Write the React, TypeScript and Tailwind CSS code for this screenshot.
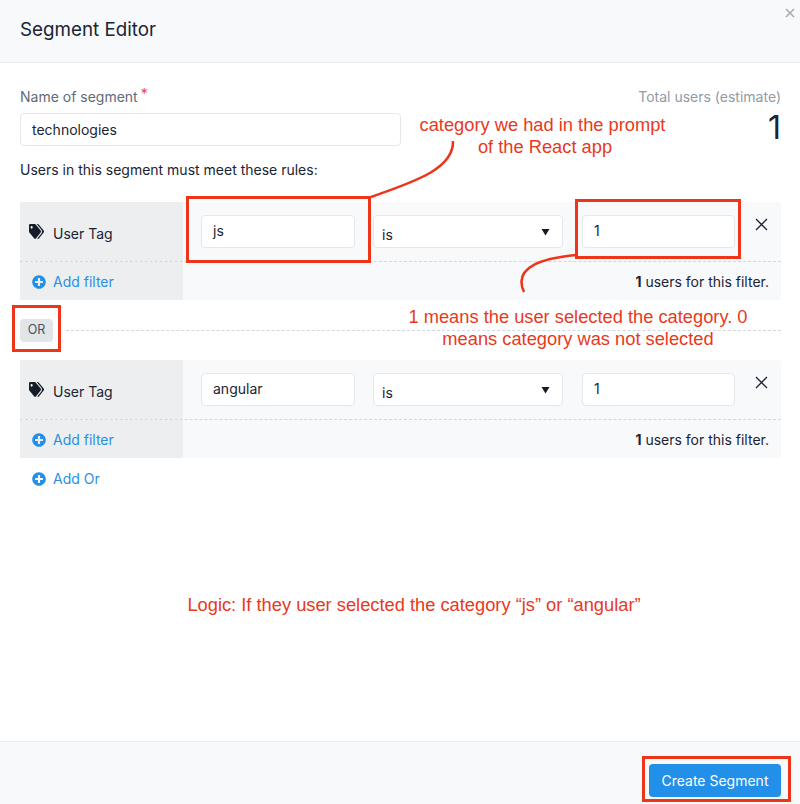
import { FaPlusCircle, FaTags } from "react-icons/fa";

const ink = "text-[#1a2433]";

function Field({ value, className }: { value: string; className: string }) {
  return (
    <div className={`h-[33px] rounded-[4px] border border-[#e4e7eb] bg-white pl-[11px] text-[14px] leading-[30px] ${ink} ${className}`}>
      {value}
    </div>
  );
}

function AddLink({ label }: { label: string }) {
  return (
    <div className="flex items-center gap-[7px] text-[14px] leading-5 text-[#2b8fe0]">
      <FaPlusCircle className="h-[14px] w-[14px] text-[#2290e8]" />
      <span>{label}</span>
    </div>
  );
}

function Rule({ tag }: { tag: string }) {
  return (
    <div className="h-[98px] rounded-[3px] bg-[#f8f9fb]">
      <div className="flex h-[60px] border-b border-dashed border-[#d3d6da]">
        <div className={`flex w-[163px] shrink-0 items-center gap-[9px] bg-[#eceef0] pl-[9px] pt-[3px] text-[14px] ${ink}`}>
          <FaTags preserveAspectRatio="none" className="-mt-[3px] h-[15px] w-[15px] text-[#141c28]" />
          <span>User Tag</span>
        </div>
        <div className="flex flex-1 gap-[18px] pl-[18px] pt-[13px]">
          <Field value={tag} className="w-[154px]" />
          <div className={`flex h-[33px] w-[190px] items-center justify-between rounded-[4px] border border-[#e4e7eb] bg-white pl-[8px] pr-[12px] text-[14px] ${ink}`}>
            <span className="pt-[6px]">is</span>
            <svg width="9" height="8" viewBox="0 0 9 8" className="text-[#141c28]">
              <path d="M0.5 1h8L4.5 7.5z" fill="currentColor" />
            </svg>
          </div>
          <Field value="1" className="ml-px w-[153px]" />
          <svg width="13" height="13" viewBox="0 0 13 13" className="ml-[2px] mt-[3px] text-[#1a2433]">
            <path d="M1 1l11 11M12 1L1 12" stroke="currentColor" strokeWidth="1.3" />
          </svg>
        </div>
      </div>
      <div className="flex h-[38px] pt-px">
        <div className="-mt-px flex w-[163px] shrink-0 items-center bg-[#eceef0] pl-[12px] pt-[2px]">
          <AddLink label="Add filter" />
        </div>
        <div className={`flex flex-1 items-center justify-end pr-[12px] text-[14px] ${ink}`}>
          <span>
            <b className="font-bold">1</b> users for this filter.
          </span>
        </div>
      </div>
    </div>
  );
}

function RedBox({ className }: { className: string }) {
  return <div className={`absolute border-[3px] border-[#ee3419] ${className}`} />;
}

function Note({ className, children }: { className: string; children: React.ReactNode }) {
  return (
    <div className={`absolute text-center font-['Liberation_Sans',sans-serif] text-[18.3px] leading-[22px] text-[#e8391d] ${className}`}>
      {children}
    </div>
  );
}

export default function App() {
  return (
    <div className="relative flex h-[804px] w-[800px] flex-col overflow-hidden bg-white font-['Inter',sans-serif]">
      <header className="flex h-[63px] shrink-0 items-center border-b border-[#e8ebef] bg-[#f8f9fb] px-5">
        <h1 className={`pb-px text-[18.8px] font-normal ${ink}`}>Segment Editor</h1>
      </header>

      <main className="flex-1 pl-5 pr-[19px] pt-[25px]">
        <div className="flex items-start justify-between">
          <div>
            <div className="text-[14px] leading-[18px] text-[#626a74]">
              Name of segment<span className="relative -top-[3px] ml-[3px] text-[#e5484d]">*</span>
            </div>
            <div className={`mt-[7px] h-[33px] w-[381px] rounded-[4px] border border-[#e4e7eb] bg-white pl-[11px] text-[14px] leading-[31px] ${ink}`}>
              technologies
            </div>
          </div>
          <div className="text-right">
            <div className="text-[14px] leading-[18px] text-[#929aa6]">Total users (estimate)</div>
            <div className={`mt-[2px] text-[32px] leading-[40px] ${ink}`}>1</div>
          </div>
        </div>
        <p className={`mt-[12px] text-[14px] leading-5 ${ink}`}>Users in this segment must meet these rules:</p>

        <div className="mt-[22px]">
          <Rule tag="js" />
          <div className="flex h-[60px] items-center gap-[13px]">
            <div className="flex h-[23px] w-[33px] items-center justify-center rounded-[4px] bg-[#e2e5e8] text-[12.5px] text-[#4a525c]">
              OR
            </div>
            <div className="flex-1 border-t border-dashed border-[#d3d6da]" />
          </div>
          <Rule tag="angular" />
          <div className="mt-[11px] pl-[12px]">
            <AddLink label="Add Or" />
          </div>
        </div>
      </main>

      <footer className="flex h-[63px] shrink-0 items-center justify-end border-t border-[#e8ebef] bg-[#f8f9fb] pr-[19px] pt-[15px]">
        <div className="flex h-[33px] w-[132px] items-center justify-center rounded-[4px] bg-[#2290e8] text-[14px] text-white">
          Create Segment
        </div>
      </footer>

      {/* dialog close */}
      <svg width="10" height="10" viewBox="0 0 10 10" className="absolute right-[5px] top-[8px] text-[#a5acb5]">
        <path d="M1 1l8 8M9 1L1 9" stroke="currentColor" strokeWidth="1.6" />
      </svg>

      {/* red annotations drawn over the screenshot */}
      <RedBox className="left-[186px] top-[196px] h-[67px] w-[185px]" />
      <RedBox className="left-[575px] top-[199px] h-[60px] w-[166px]" />
      <RedBox className="left-[12px] top-[305px] h-[47px] w-[49px]" />
      <RedBox className="left-[642px] top-[756px] h-[46px] w-[149px]" />

      <svg width="800" height="804" viewBox="0 0 800 804" fill="none" className="pointer-events-none absolute left-0 top-0">
        <path d="M371 197C410 183 454 170 453 141" stroke="#ee3419" strokeWidth="2.5" />
        <path d="M576 255C545 258 512 266 524 292" stroke="#ee3419" strokeWidth="2.5" />
      </svg>

      <Note className="left-[400px] top-[114px] w-[285px]">
        category we had in the prompt
        <br />
        <span className="ml-[5px]">of the React app</span>
      </Note>
      <Note className="left-[378px] top-[306px] w-[400px]">
        1 means the user selected the category. 0
        <br />
        means category was not selected
      </Note>
      <Note className="left-[149px] top-[594px] w-[530px]">Logic: If they user selected the category “js” or “angular”</Note>
    </div>
  );
}
